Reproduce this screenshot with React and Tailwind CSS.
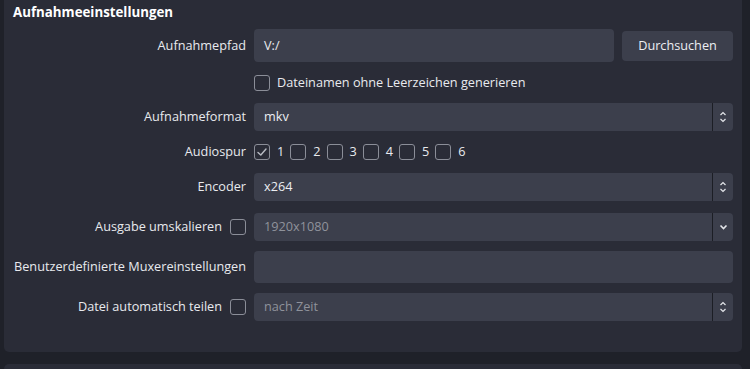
import React from "react";

const Check = ({ checked }) => (
  <div className="flex h-[16px] w-[16px] shrink-0 items-center justify-center rounded-[3px] border-[1.5px] border-[#8b8e98]">
    {checked && (
      <svg width="12" height="12" viewBox="0 0 12 12" fill="none">
        <path d="M2 6.5 L4.8 9 L10 3" stroke="#b9bcc4" strokeWidth="1.4" strokeLinecap="round" strokeLinejoin="round" />
      </svg>
    )}
  </div>
);

const Arrows = ({ single }) => (
  <div className="flex w-[21px] items-center justify-center border-l border-[#1c1e25]">
    {single ? (
      <svg width="9" height="6" viewBox="0 0 9 6" fill="none">
        <path d="M1.5 1.5 L4.5 4.5 L7.5 1.5" stroke="#e4e6ea" strokeWidth="1.6" />
      </svg>
    ) : (
      <svg width="8" height="14" viewBox="0 0 8 14" fill="none">
        <path d="M1.5 5 L4 2.5 L6.5 5" stroke="#e4e6ea" strokeWidth="1.2" />
        <path d="M1.5 9 L4 11.5 L6.5 9" stroke="#e4e6ea" strokeWidth="1.2" />
      </svg>
    )}
  </div>
);

const Select = ({ value, muted, single }) => (
  <div className="flex h-[28px] flex-1 rounded-[4px] bg-[#3c3f4c]">
    <div className={`flex flex-1 items-center pl-[10px] ${muted ? "text-[#8f929b]" : "text-[#eceef2]"}`}>
      {value}
    </div>
    <Arrows single={single} />
  </div>
);

const Row = ({ label, extra, children, className }) => (
  <div className={`flex items-center ${className}`}>
    <div className="flex w-[242px] shrink-0 items-center justify-end gap-[8px]">
      {label && <span>{label}</span>}
      {extra}
    </div>
    <div className="ml-[8px] flex flex-1 items-center">{children}</div>
  </div>
);

export default function App() {
  const tracks = [1, 2, 3, 4, 5, 6];
  return (
    <div
      className="h-[369px] w-[750px] overflow-hidden bg-[#1f2129] text-[12.7px] text-[#e8eaee]"
      style={{ fontFamily: '"Open Sans", "Noto Sans", sans-serif' }}
    >
      <div className="ml-[4px] flex h-[352px] w-[738px] flex-col rounded-b-[5px] bg-[#2a2c37] pr-[9px]">
        {/* section title */}
        <div className="pl-[9px] pt-[2px] text-[13.3px] font-bold leading-[20px] text-white">
          Aufnahmeeinstellungen
        </div>

        <Row label="Aufnahmepfad" className="mt-[7px]">
          <div className="flex h-[33px] flex-1 items-center rounded-[4px] bg-[#3c3f4c] pl-[10px]">V:/</div>
          <button className="ml-[8px] h-[30px] w-[111px] rounded-[4px] bg-[#3c3f4c] text-[#eceef2]">
            Durchsuchen
          </button>
        </Row>

        <Row className="mt-[13px] h-[16px]">
          <Check />
          <span className="ml-[7px]">Dateinamen ohne Leerzeichen generieren</span>
        </Row>

        <Row label="Aufnahmeformat" className="mt-[12px]">
          <Select value="mkv" />
        </Row>

        <Row label="Audiospur" className="mt-[13px] h-[16px]">
          <div className="flex items-center gap-[6px]">
            {tracks.map((t) => (
              <div key={t} className="flex items-center gap-[7px]">
                <Check checked={t === 1} />
                <span>{t}</span>
              </div>
            ))}
          </div>
        </Row>

        <Row label="Encoder" className="mt-[13px]">
          <Select value="x264" />
        </Row>

        <Row label="Ausgabe umskalieren" extra={<Check />} className="mt-[12px]">
          <Select value="1920x1080" muted single />
        </Row>

        <Row label="Benutzerdefinierte Muxereinstellungen" className="mt-[10px]">
          <div className="h-[32px] flex-1 rounded-[4px] bg-[#3c3f4c]" />
        </Row>

        <Row label="Datei automatisch teilen" extra={<Check />} className="mt-[10px]">
          <Select value="nach Zeit" muted />
        </Row>
      </div>
      <div className="mt-[12px] ml-[4px] h-[20px] w-[738px] rounded-t-[5px] bg-[#2a2c37]" />
    </div>
  );
}
